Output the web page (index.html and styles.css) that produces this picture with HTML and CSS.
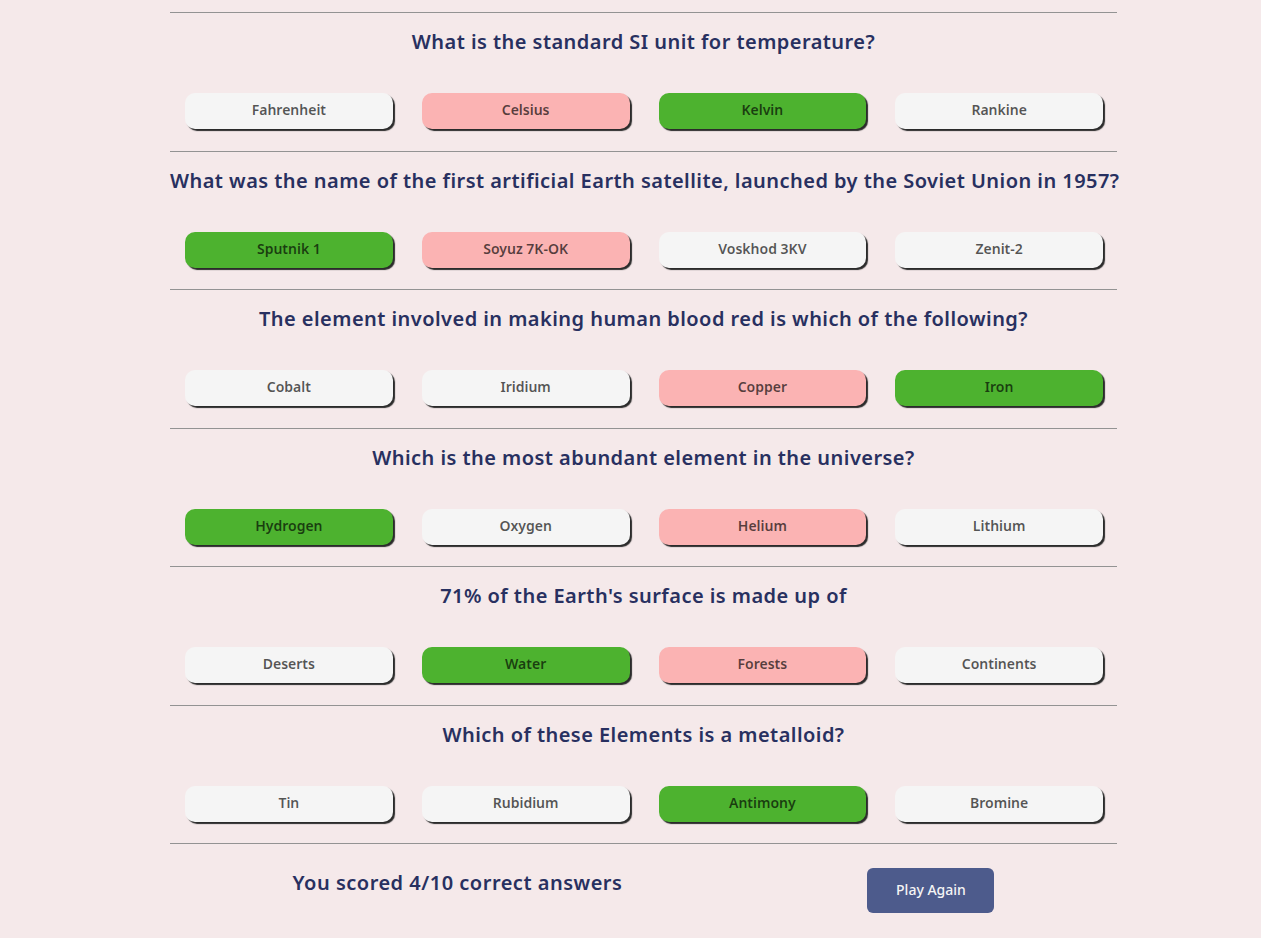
FILE: index.html
```html
<!DOCTYPE html>
<html lang="en">
<head>
<meta charset="utf-8">
<title>Quiz results</title>
<link rel="stylesheet" href="styles.css">
</head>
<body>
<main class="quiz">
  <section class="question">
    <h2 class="question-title">What is the standard SI unit for temperature?</h2>
    <div class="answers">
      <button class="answer">Fahrenheit</button>
      <button class="answer wrong">Celsius</button>
      <button class="answer correct">Kelvin</button>
      <button class="answer">Rankine</button>
    </div>
  </section>
  <section class="question">
    <h2 class="question-title">What was the name of the first artificial Earth satellite, launched by the Soviet Union in 1957?</h2>
    <div class="answers">
      <button class="answer correct">Sputnik 1</button>
      <button class="answer wrong">Soyuz 7K-OK</button>
      <button class="answer">Voskhod 3KV</button>
      <button class="answer">Zenit-2</button>
    </div>
  </section>
  <section class="question">
    <h2 class="question-title">The element involved in making human blood red is which of the following?</h2>
    <div class="answers">
      <button class="answer">Cobalt</button>
      <button class="answer">Iridium</button>
      <button class="answer wrong">Copper</button>
      <button class="answer correct">Iron</button>
    </div>
  </section>
  <section class="question">
    <h2 class="question-title">Which is the most abundant element in the universe?</h2>
    <div class="answers">
      <button class="answer correct">Hydrogen</button>
      <button class="answer">Oxygen</button>
      <button class="answer wrong">Helium</button>
      <button class="answer">Lithium</button>
    </div>
  </section>
  <section class="question">
    <h2 class="question-title">71% of the Earth's surface is made up of</h2>
    <div class="answers">
      <button class="answer">Deserts</button>
      <button class="answer correct">Water</button>
      <button class="answer wrong">Forests</button>
      <button class="answer">Continents</button>
    </div>
  </section>
  <section class="question">
    <h2 class="question-title">Which of these Elements is a metalloid?</h2>
    <div class="answers">
      <button class="answer">Tin</button>
      <button class="answer">Rubidium</button>
      <button class="answer correct">Antimony</button>
      <button class="answer">Bromine</button>
    </div>
  </section>
  <footer class="result">
    <p class="score">You scored 4/10 correct answers</p>
    <button class="play-again">Play Again</button>
  </footer>
</main>
</body>
</html>
```

FILE: styles.css
```css
html, body {
  margin: 0;
  padding: 0;
  background: #f5e9ea;
}

body {
  font-family: "Noto Sans", "Lato", sans-serif;
  color: #293264;
}

.quiz {
  width: 947px;
  margin-left: 170px;
  padding-top: 12px;
}

.question {
  border-top: 1px solid #939393;
  padding: 17px 0 21.5px;
}

.question-title {
  margin: 0;
  font-size: 20px;
  line-height: 24px;
  font-weight: 600;
  letter-spacing: 0.45px;
  text-align: center;
  color: #283060;
  white-space: nowrap;
}

.answers {
  display: flex;
  gap: 29px;
  padding: 0 14px 0 15px;
  margin-top: 39px;
}

.answer {
  flex: 1 1 0;
  height: 36px;
  border: none;
  border-radius: 10px;
  background: #f5f5f5;
  box-shadow: 2px 2px 1px #2b2b2b;
  font-family: inherit;
  font-size: 14px;
  line-height: 34px;
  font-weight: 600;
  color: rgba(0, 0, 0, 0.66);
  padding: 0 0 2px;
}

.answer.correct {
  background: #4db22f;
}

.answer.wrong {
  background: #fbb3b3;
}

.result {
  border-top: 1px solid #939393;
  display: flex;
  justify-content: space-around;
  align-items: flex-start;
  padding-top: 24px;
}

.score {
  margin: 0;
  font-size: 20px;
  line-height: 30px;
  font-weight: 600;
  letter-spacing: 0.5px;
  color: #283060;
}

.play-again {
  width: 127px;
  height: 45px;
  border: none;
  border-radius: 6px;
  background: #4d5b8c;
  color: #f5f5f5;
  font-family: inherit;
  font-size: 14px;
  font-weight: 500;
  padding: 0 0 2px;
}
```
